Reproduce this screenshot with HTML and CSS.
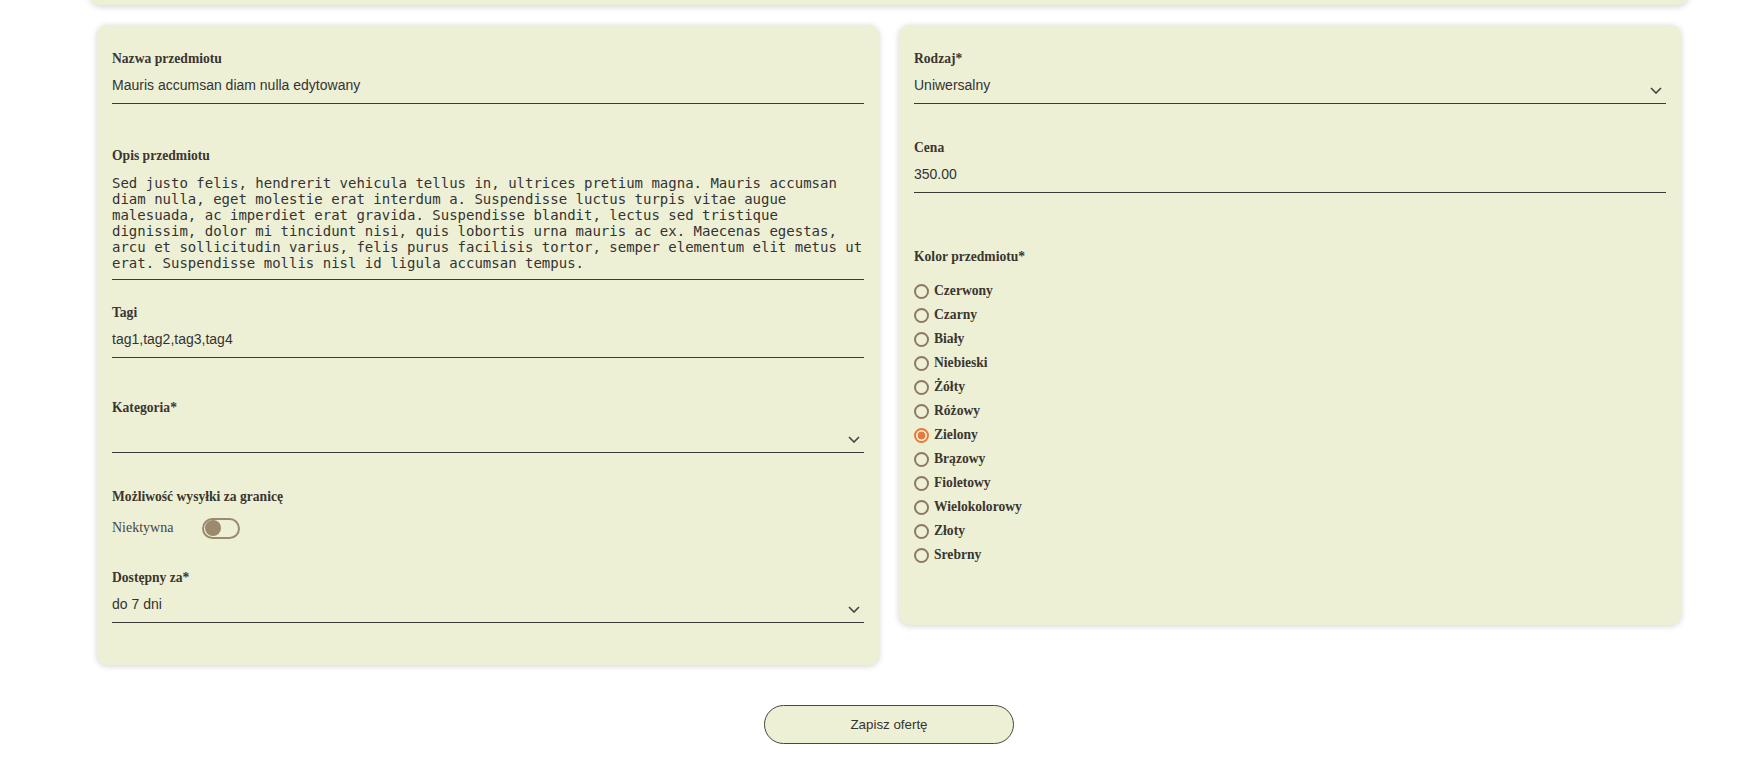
FILE: index.html
```html
<!DOCTYPE html>
<html lang="pl">
<head>
<meta charset="utf-8">
<title>Edycja oferty</title>
<link rel="stylesheet" href="styles.css">
</head>
<body>
<div class="page">
  <div class="top-card"></div>
  <div class="columns">
    <section class="card card-left">
      <div class="field">
        <div class="label">Nazwa przedmiotu</div>
        <div class="input"><span class="value">Mauris accumsan diam nulla edytowany</span></div>
      </div>
      <div class="field f-desc">
        <div class="label">Opis przedmiotu</div>
        <div class="textarea">Sed justo felis, hendrerit vehicula tellus in, ultrices pretium magna. Mauris accumsan
diam nulla, eget molestie erat interdum a. Suspendisse luctus turpis vitae augue
malesuada, ac imperdiet erat gravida. Suspendisse blandit, lectus sed tristique
dignissim, dolor mi tincidunt nisi, quis lobortis urna mauris ac ex. Maecenas egestas,
arcu et sollicitudin varius, felis purus facilisis tortor, semper elementum elit metus ut
erat. Suspendisse mollis nisl id ligula accumsan tempus.</div>
      </div>
      <div class="field f-tags">
        <div class="label">Tagi</div>
        <div class="input"><span class="value">tag1,tag2,tag3,tag4</span></div>
      </div>
      <div class="field f-cat">
        <div class="label">Kategoria*</div>
        <div class="input"><span class="value"></span>
          <svg class="chevron" viewBox="0 0 12 7"><polyline points="1,1 6,6 11,1"/></svg>
        </div>
      </div>
      <div class="field f-ship">
        <div class="label">Możliwość wysyłki za granicę</div>
        <div class="toggle-row">
          <span class="toggle-text">Niektywna</span>
          <span class="toggle"><span class="knob"></span></span>
        </div>
      </div>
      <div class="field f-avail">
        <div class="label">Dostępny za*</div>
        <div class="input"><span class="value">do 7 dni</span>
          <svg class="chevron" viewBox="0 0 12 7"><polyline points="1,1 6,6 11,1"/></svg>
        </div>
      </div>
    </section>

    <section class="card card-right">
      <div class="field">
        <div class="label">Rodzaj*</div>
        <div class="input"><span class="value">Uniwersalny</span>
          <svg class="chevron" viewBox="0 0 12 7"><polyline points="1,1 6,6 11,1"/></svg>
        </div>
      </div>
      <div class="field f-price">
        <div class="label">Cena</div>
        <div class="input"><span class="value">350.00</span></div>
      </div>
      <div class="field f-color">
        <div class="label">Kolor przedmiotu*</div>
        <ul class="radios">
          <li class="radio"><span class="dot"></span><span class="radio-label">Czerwony</span></li>
          <li class="radio"><span class="dot"></span><span class="radio-label">Czarny</span></li>
          <li class="radio"><span class="dot"></span><span class="radio-label">Biały</span></li>
          <li class="radio"><span class="dot"></span><span class="radio-label">Niebieski</span></li>
          <li class="radio"><span class="dot"></span><span class="radio-label">Żółty</span></li>
          <li class="radio"><span class="dot"></span><span class="radio-label">Różowy</span></li>
          <li class="radio checked"><span class="dot"></span><span class="radio-label">Zielony</span></li>
          <li class="radio"><span class="dot"></span><span class="radio-label">Brązowy</span></li>
          <li class="radio"><span class="dot"></span><span class="radio-label">Fioletowy</span></li>
          <li class="radio"><span class="dot"></span><span class="radio-label">Wielokolorowy</span></li>
          <li class="radio"><span class="dot"></span><span class="radio-label">Złoty</span></li>
          <li class="radio"><span class="dot"></span><span class="radio-label">Srebrny</span></li>
        </ul>
      </div>
    </section>
  </div>
  <div class="actions">
    <button class="btn" type="button">Zapisz ofertę</button>
  </div>
</div>
</body>
</html>
```

FILE: styles.css
```css
* { box-sizing: border-box; }
html, body { margin: 0; padding: 0; background: #ffffff; }
body { font-family: "Liberation Sans", Arial, sans-serif; color: #333; }

.page { width: 1598px; margin-left: 90px; }

.top-card {
  height: 20px;
  margin-top: -15px;
  background: #eef0d6;
  border-radius: 0 0 10px 10px;
  box-shadow: 0 2px 6px rgba(0, 0, 0, 0.16);
}

.columns {
  display: grid;
  grid-template-columns: 1fr 1fr;
  gap: 20px;
  padding: 0 7px;
  margin-top: 20px;
  align-items: start;
}

.card {
  background: #eef0d6;
  border-radius: 10px;
  box-shadow: 0 1px 6px rgba(0, 0, 0, 0.18);
  padding: 26px 15px 42px;
}
.card-right { padding-bottom: 58px; }

.label {
  font-family: "Liberation Serif", "Times New Roman", serif;
  font-weight: bold;
  font-size: 13.6px;
  line-height: 16px;
  color: #3a3630;
}

.input {
  display: flex;
  align-items: flex-end;
  height: 29px;
  margin-top: 8px;
  padding-bottom: 8px;
  border-bottom: 1px solid #3a3935;
}
.value {
  flex: 1;
  font-size: 14px;
  line-height: 20px;
  color: #333;
}
.chevron {
  width: 12px;
  height: 7px;
  margin: 0 4px 1px 0;
  fill: none;
  stroke: #444;
  stroke-width: 1.6;
}

.f-desc { margin-top: 44px; }
.f-tags { margin-top: 25px; }
.f-cat { margin-top: 42px; }
.f-ship { margin-top: 36px; }
.f-avail { margin-top: 31px; }
.f-price { margin-top: 36px; }
.f-color { margin-top: 56px; }

.textarea {
  margin-top: 11px;
  padding-bottom: 8px;
  border-bottom: 1px solid #3a3935;
  font-family: "DejaVu Sans Mono", "Liberation Mono", monospace;
  font-size: 14px;
  line-height: 16px;
  color: #333;
  white-space: pre-line;
}

.toggle-row {
  display: flex;
  align-items: center;
  height: 22px;
  margin-top: 12px;
}
.toggle-text {
  font-family: "Liberation Serif", "Times New Roman", serif;
  font-size: 14px;
  color: #444;
  margin-right: 29px;
}
.toggle {
  display: flex;
  align-items: center;
  width: 38px;
  height: 21px;
  padding-left: 1px;
  border: 2px solid #9a8a6e;
  border-radius: 11px;
}
.knob {
  width: 16px;
  height: 16px;
  border-radius: 50%;
  background: #9b8a6c;
}

.radios {
  list-style: none;
  margin: 14px 0 0;
  padding: 0;
}
.radio {
  display: flex;
  align-items: center;
  height: 24px;
  gap: 5px;
}
.dot {
  width: 15px;
  height: 15px;
  border: 2px solid #8b7a60;
  border-radius: 50%;
}
.radio.checked .dot {
  border-color: #e8793a;
  background: radial-gradient(circle, #e8793a 0 3.6px, transparent 4.2px);
}
.radio-label {
  font-family: "Liberation Serif", "Times New Roman", serif;
  font-weight: bold;
  font-size: 13.6px;
  color: #3a3630;
}

.actions {
  display: flex;
  justify-content: center;
  margin-top: 40px;
}
.btn {
  width: 250px;
  height: 39px;
  border: 1px solid #4a463c;
  border-radius: 20px;
  background: #eef0d6;
  font-family: "Liberation Sans", Arial, sans-serif;
  font-size: 13.33px;
  color: #333;
  padding: 0;
}
```
